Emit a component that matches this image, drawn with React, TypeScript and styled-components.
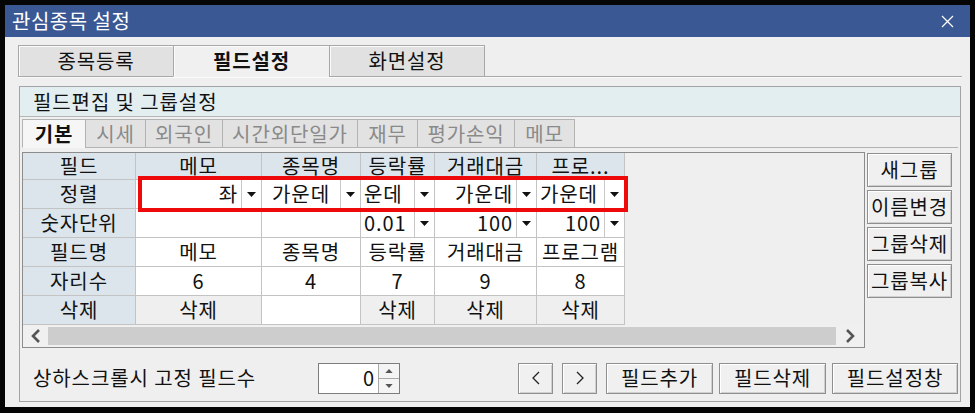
import React from "react";
import styled, { createGlobalStyle, css } from "styled-components";

const GlobalStyle = createGlobalStyle`
  html, body { margin: 0; padding: 0; background: #050505; }
  body { font-family: "Noto Sans CJK KR", "Noto Sans", sans-serif; color: #111; }
  * { box-sizing: border-box; }
`;

// Dialog text: large square Hangul with a little tracking
const dialogText = css`
  font-size: 20px;
  letter-spacing: 0.9px;
  line-height: 1.2;
`;

const Frame = styled.div`
  width: 975px;
  height: 413px;
  background: #050505;
  padding: 5px 5px 6px 5px;
`;

const Window = styled.div`
  width: 965px;
  height: 402px;
  background: #efefef;
  display: flex;
  flex-direction: column;
`;

const TitleBar = styled.div`
  height: 32px;
  flex: none;
  background: #3a5894;
  color: #fff;
  display: flex;
  align-items: center;
  justify-content: space-between;
  padding: 0 16px 0 7px;
  font-size: 20px;
  letter-spacing: 0.5px;
  line-height: 1.2;
`;

const Body = styled.div`
  flex: 1;
  display: flex;
  flex-direction: column;
  padding: 8px 8px 0 13px;
`;

const TabStrip = styled.div`
  display: flex;
  height: 32px;
  border-bottom: 1px solid #a8a8a8;
  box-shadow: 0 1px 0 #fafafa;
`;

const MainTab = styled.div<{ $active?: boolean }>`
  ${dialogText};
  width: ${(p) => (p.$active ? 157 : 156)}px;
  height: 32px;
  margin-bottom: -1px;
  display: flex;
  align-items: center;
  justify-content: center;
  font-weight: ${(p) => (p.$active ? 700 : 400)};
  background: ${(p) => (p.$active ? "#f0f0f0" : "#e1e1e1")};
  border: 1px solid #a8a8a8;
  border-bottom-color: ${(p) => (p.$active ? "#f0f0f0" : "#a8a8a8")};
  box-shadow: inset 1px 1px 0 #fbfbfb;
  & + & { margin-left: -1px; }
`;

const Group = styled.div`
  margin: 9px 0 0 1px;
  width: 942px;
  height: 316px;
  border: 1px solid #a3a3a3;
  display: flex;
  flex-direction: column;
`;

const GroupHeader = styled.div`
  ${dialogText};
  height: 30px;
  flex: none;
  background: #e3eef1;
  border-bottom: 1px solid #b5b5b5;
  display: flex;
  align-items: center;
  padding-left: 13px;
`;

const SubTabStrip = styled.div`
  display: flex;
  margin: 2px 2px 0 2px;
  height: 29px;
  border-bottom: 1px solid #b3b3b3;
`;

const SubTab = styled.div<{ $w: number; $active?: boolean }>`
  ${dialogText};
  width: ${(p) => p.$w}px;
  height: 29px;
  margin-bottom: -1px;
  display: flex;
  align-items: center;
  justify-content: center;
  font-weight: ${(p) => (p.$active ? 700 : 400)};
  color: ${(p) => (p.$active ? "#111" : "#8a8a8a")};
  background: ${(p) => (p.$active ? "#f6f6f6" : "#e2e2e2")};
  border: 1px solid #b3b3b3;
  border-bottom-color: ${(p) => (p.$active ? "#f6f6f6" : "#b3b3b3")};
  & + & { margin-left: -1px; }
`;

const Content = styled.div`
  display: flex;
  gap: 2px;
  margin: 4px 0 0 2px;
  height: 196px;
`;

const GridPanel = styled.div`
  position: relative;
  width: 843px;
  height: 196px;
  border: 1px solid #8c8c8c;
  background: #efefef;
  display: flex;
  flex-direction: column;
`;

const Table = styled.div`
  display: grid;
  grid-template-columns: 113px 126px 99px 74px 102px 88px;
  grid-template-rows: 27px repeat(5, 29px);
  width: 602px;
`;

const Cell = styled.div<{ $kind?: "head" | "data" | "del" | "blank" }>`
  ${dialogText};
  border-right: 1px solid #c3c3c3;
  border-bottom: 1px solid #c3c3c3;
  display: flex;
  align-items: center;
  justify-content: center;
  white-space: nowrap;
  background: ${(p) =>
    p.$kind === "head" ? "#dce5ec" : p.$kind === "del" ? "#efefef" : "#ffffff"};
`;

const DropCell = styled.div`
  ${dialogText};
  border-right: 1px solid #c3c3c3;
  border-bottom: 1px solid #c3c3c3;
  background: #fff;
  display: flex;
  align-items: stretch;
  white-space: nowrap;
`;

const DropText = styled.div<{ $align: "left" | "center" | "right" }>`
  flex: 1;
  display: flex;
  align-items: center;
  justify-content: ${(p) =>
    p.$align === "left" ? "flex-start" : p.$align === "right" ? "flex-end" : "center"};
  padding: 0 3px;
`;

const DropButton = styled.div`
  width: 20px;
  flex: none;
  display: flex;
  align-items: center;
  justify-content: center;
  border-left: 1px solid #c8c8c8;
  background: #fff;
`;

const Highlight = styled.div`
  position: absolute;
  left: 115px;
  top: 23px;
  width: 490px;
  height: 36px;
  border: 4px solid #ee0a0a;
  pointer-events: none;
`;

const ScrollBar = styled.div`
  margin-top: auto;
  height: 22px;
  display: flex;
  align-items: stretch;
  background: #f0f0f0;
`;

const ScrollArrow = styled.div<{ $w: number }>`
  width: ${(p) => p.$w}px;
  flex: none;
  display: flex;
  align-items: center;
  justify-content: center;
`;

const ScrollThumb = styled.div`
  flex: 1;
  margin: 2px 0;
  background: #cdcdcd;
`;

const SideButtons = styled.div`
  width: 85px;
  display: flex;
  flex-direction: column;
  gap: 3px;
  padding-top: 1px;
`;

const Button = styled.div<{ $w?: number; $h?: number }>`
  ${dialogText};
  width: ${(p) => (p.$w ? `${p.$w}px` : "100%")};
  height: ${(p) => p.$h ?? 34}px;
  flex: none;
  display: flex;
  align-items: center;
  justify-content: center;
  background: #f0f0f0;
  border: 1px solid #8f8f8f;
  box-shadow: inset 1px 1px 0 #ffffff, inset -1px -1px 0 #cfcfcf;
`;

const BottomRow = styled.div`
  display: flex;
  align-items: center;
  margin-top: 12px;
  height: 36px;
  padding: 0 2px 0 13px;
`;

const Label = styled.div`
  ${dialogText};
  width: 285px;
`;

const Spinner = styled.div`
  display: flex;
  height: 31px;
  width: 82px;
  border: 1px solid #7d7d7d;
  background: #fff;
`;

const SpinInput = styled.div`
  ${dialogText};
  flex: 1;
  display: flex;
  align-items: center;
  justify-content: flex-end;
  padding-right: 3px;
`;

const SpinArrows = styled.div`
  width: 21px;
  display: flex;
  flex-direction: column;
  border-left: 1px solid #a8a8a8;
  background: #f4f4f4;
`;

const SpinHalf = styled.div`
  flex: 1;
  display: flex;
  align-items: center;
  justify-content: center;
  & + & { border-top: 1px solid #a8a8a8; }
`;

const ActionGroup = styled.div`
  margin-left: auto;
  display: flex;
  align-items: center;
  gap: 6px;
`;

const NavGroup = styled.div`
  display: flex;
  gap: 9px;
  margin-right: 3px;
`;

const Triangle = ({ up = false, size = 9, color = "#111" }: { up?: boolean; size?: number; color?: string }) => (
  <svg width={size} height={Math.round(size * 0.55)} viewBox="0 0 10 5.5">
    {up ? <polygon points="0,5.5 10,5.5 5,0" fill={color} /> : <polygon points="0,0 10,0 5,5.5" fill={color} />}
  </svg>
);

const Chevron = ({ dir, bold = false }: { dir: "left" | "right"; bold?: boolean }) => (
  <svg width="10" height="14" viewBox="0 0 10 14">
    <polyline
      points={dir === "left" ? "8,1 2,7 8,13" : "2,1 8,7 2,13"}
      fill="none"
      stroke={bold ? "#555" : "#222"}
      strokeWidth={bold ? 2.6 : 1.3}
    />
  </svg>
);

type Align = "left" | "center" | "right";

const Dropdown = ({ value, align }: { value: string; align: Align }) => (
  <DropCell>
    <DropText $align={align}>{value}</DropText>
    <DropButton>
      <Triangle />
    </DropButton>
  </DropCell>
);

const columns = ["메모", "종목명", "등락률", "거래대금", "프로..."];
const sortRow: { v: string; a: Align }[] = [
  { v: "좌", a: "right" },
  { v: "가운데", a: "center" },
  { v: "운데", a: "left" },
  { v: "가운데", a: "right" },
  { v: "가운데", a: "left" },
];
const unitRow: ({ v: string; a: Align } | null)[] = [
  null,
  null,
  { v: "0.01", a: "left" },
  { v: "100", a: "right" },
  { v: "100", a: "right" },
];
const nameRow = ["메모", "종목명", "등락률", "거래대금", "프로그램"];
const digitRow = ["6", "4", "7", "9", "8"];
const deleteRow = ["삭제", "", "삭제", "삭제", "삭제"];

const subTabs: { label: string; w: number }[] = [
  { label: "기본", w: 64 },
  { label: "시세", w: 61 },
  { label: "외국인", w: 78 },
  { label: "시간외단일가", w: 136 },
  { label: "재무", w: 61 },
  { label: "평가손익", w: 98 },
  { label: "메모", w: 61 },
];

export default function App() {
  return (
    <>
      <GlobalStyle />
      <Frame>
        <Window>
          <TitleBar>
            <span>관심종목 설정</span>
            <svg width="13" height="13" viewBox="0 0 13 13">
              <path d="M1 1 L12 12 M12 1 L1 12" stroke="#fff" strokeWidth="1.2" />
            </svg>
          </TitleBar>
          <Body>
            <TabStrip>
              <MainTab>종목등록</MainTab>
              <MainTab $active>필드설정</MainTab>
              <MainTab>화면설정</MainTab>
            </TabStrip>
            <Group>
              <GroupHeader>필드편집 및 그룹설정</GroupHeader>
              <SubTabStrip>
                {subTabs.map((t, i) => (
                  <SubTab key={t.label} $w={t.w} $active={i === 0}>
                    {t.label}
                  </SubTab>
                ))}
              </SubTabStrip>
              <Content>
                <GridPanel>
                  <Table>
                    <Cell $kind="head">필드</Cell>
                    {columns.map((c) => (
                      <Cell key={c} $kind="head">{c}</Cell>
                    ))}
                    <Cell $kind="head">정렬</Cell>
                    {sortRow.map((s, i) => (
                      <Dropdown key={i} value={s.v} align={s.a} />
                    ))}
                    <Cell $kind="head">숫자단위</Cell>
                    {unitRow.map((u, i) =>
                      u ? <Dropdown key={i} value={u.v} align={u.a} /> : <Cell key={i} $kind="blank" />
                    )}
                    <Cell $kind="head">필드명</Cell>
                    {nameRow.map((n, i) => (
                      <Cell key={i} $kind="data">{n}</Cell>
                    ))}
                    <Cell $kind="head">자리수</Cell>
                    {digitRow.map((d, i) => (
                      <Cell key={i} $kind="data">{d}</Cell>
                    ))}
                    <Cell $kind="head">삭제</Cell>
                    {deleteRow.map((d, i) => (
                      <Cell key={i} $kind={d ? "del" : "blank"}>{d}</Cell>
                    ))}
                  </Table>
                  <ScrollBar>
                    <ScrollArrow $w={25}>
                      <Chevron dir="left" bold />
                    </ScrollArrow>
                    <ScrollThumb />
                    <ScrollArrow $w={28}>
                      <Chevron dir="right" bold />
                    </ScrollArrow>
                  </ScrollBar>
                  <Highlight />
                </GridPanel>
                <SideButtons>
                  <Button>새그룹</Button>
                  <Button>이름변경</Button>
                  <Button>그룹삭제</Button>
                  <Button>그룹복사</Button>
                </SideButtons>
              </Content>
              <BottomRow>
                <Label>상하스크롤시 고정 필드수</Label>
                <Spinner>
                  <SpinInput>0</SpinInput>
                  <SpinArrows>
                    <SpinHalf>
                      <Triangle up size={8} color="#555" />
                    </SpinHalf>
                    <SpinHalf>
                      <Triangle size={8} color="#555" />
                    </SpinHalf>
                  </SpinArrows>
                </Spinner>
                <ActionGroup>
                  <NavGroup>
                    <Button $w={35} $h={31}>
                      <Chevron dir="left" />
                    </Button>
                    <Button $w={35} $h={31}>
                      <Chevron dir="right" />
                    </Button>
                  </NavGroup>
                  <Button $w={107} $h={31}>필드추가</Button>
                  <Button $w={107} $h={31}>필드삭제</Button>
                  <Button $w={126} $h={31}>필드설정창</Button>
                </ActionGroup>
              </BottomRow>
            </Group>
          </Body>
        </Window>
      </Frame>
    </>
  );
}
